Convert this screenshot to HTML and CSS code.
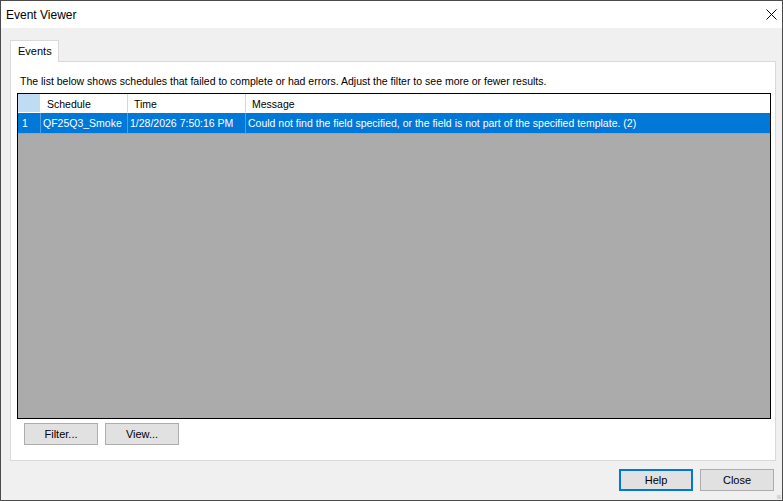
FILE: index.html
```html
<!DOCTYPE html>
<html>
<head>
<meta charset="utf-8">
<link rel="stylesheet" href="styles.css">
</head>
<body>
<div class="window">
  <div class="titlebar">
    <span class="title">Event Viewer</span>
    <svg class="close-x" width="11" height="11" viewBox="0 0 11 11"><path d="M0.5 0.5 L10.5 10.5 M10.5 0.5 L0.5 10.5" stroke="#000" stroke-width="1" fill="none"/></svg>
  </div>
  <div class="body">
    <div class="tabs">
      <div class="tab">Events</div>
    </div>
    <div class="panel">
      <div class="intro">The list below shows schedules that failed to complete or had errors. Adjust the filter to see more or fewer results.</div>
      <div class="grid">
        <div class="row head">
          <div class="cell rh rh-head"></div>
          <div class="cell c1">Schedule</div>
          <div class="cell c2">Time</div>
          <div class="cell c3">Message</div>
        </div>
        <div class="row sel">
          <div class="cell rh">1</div>
          <div class="cell c1">QF25Q3_Smoke</div>
          <div class="cell c2">1/28/2026 7:50:16 PM</div>
          <div class="cell c3">Could not find the field specified, or the field is not part of the specified template. (2)</div>
        </div>
        <div class="empty"></div>
      </div>
      <div class="panel-buttons">
        <button class="btn">Filter...</button>
        <button class="btn">View...</button>
      </div>
    </div>
    <div class="footer">
      <button class="btn default">Help</button>
      <button class="btn">Close</button>
    </div>
  </div>
  <div class="grip"></div>
</div>
</body>
</html>
```

FILE: styles.css
```css
* { box-sizing: border-box; }
html, body { margin: 0; padding: 0; }
body {
  width: 783px;
  height: 501px;
  font-family: "Liberation Sans", Arial, sans-serif;
  font-size: 10.5px;
  color: #000;
  background: #fff;
}
.window {
  position: relative;
  width: 783px;
  height: 501px;
  border: 1px solid #4b4b4b;
  background: #f0f0f0;
  display: flex;
  flex-direction: column;
}
.titlebar {
  height: 27px;
  background: #fff;
  display: flex;
  align-items: center;
  justify-content: space-between;
  padding: 0 5px 0 5px;
  flex: none;
}
.title {
  font-size: 12px;
}
.close-x { margin-top: -1px; }
.body {
  flex: 1;
  display: flex;
  flex-direction: column;
  padding: 12px 6px 9px 9px;
}
.tabs {
  display: flex;
  height: 21px;
  flex: none;
}
.tab {
  width: 49px;
  height: 22px;
  background: #fff;
  border: 1px solid #d9d9d9;
  border-bottom: none;
  padding: 4px 0 0 7px;
  font-size: 11px;
  position: relative;
  z-index: 1;
}
.panel {
  width: 766px;
  height: 400px;
  background: #fff;
  border: 1px solid #d9d9d9;
  padding: 6px 4px 0 6px;
  display: flex;
  flex-direction: column;
  flex: none;
}
.intro {
  height: 25px;
  padding: 7px 0 0 3px;
  white-space: nowrap;
}
.grid {
  width: 754px;
  height: 326px;
  border: 1px solid #000;
  background: #ababab;
  display: flex;
  flex-direction: column;
  overflow: hidden;
}
.row {
  display: flex;
  flex: none;
}
.row.head {
  height: 19px;
  background: #fff;
}
.row.sel {
  height: 21px;
  background: #0078d7;
  color: #fff;
}
.cell {
  white-space: nowrap;
  overflow: hidden;
  display: flex;
  align-items: center;
  border-right: 1px solid #d5d5d5;
}
.row.head .cell { padding-top: 1px; border-bottom: 1px solid #fff; }
.row.sel .cell { border-right-color: #4f9fdf; border-bottom: 1px solid #7fa9cf; }
.rh { width: 23px; padding-left: 4px; }
.rh-head { background: #c0dcf3; border-right-color: #fff; }
.row.head .c1, .row.head .c2, .row.head .c3 { padding-left: 6px; }
.c1 { width: 87px; padding-left: 2px; }
.c2 { width: 118px; padding-left: 2px; }
.c3 { flex: 1; padding-left: 2px; border-right: none; }
.empty { flex: 1; }
.panel-buttons {
  display: flex;
  gap: 7px;
  padding: 4px 0 0 7px;
}
.btn {
  width: 74px;
  height: 22px;
  background: #e1e1e1;
  border: 1px solid #adadad;
  font-family: "Liberation Sans", Arial, sans-serif;
  font-size: 11px;
  color: #000;
  padding: 0;
  margin: 0;
}
.btn.default {
  border: 2px solid #0078d7;
}
.footer {
  display: flex;
  justify-content: flex-end;
  gap: 7px;
  padding: 8px 2px 0 0;
}
.grip {
  position: absolute;
  right: 1px;
  bottom: 1px;
  width: 4px;
  height: 4px;
  background: radial-gradient(circle, #b5b5b5 0.6px, transparent 0.8px) 0 0 / 2px 2px;
}
```
